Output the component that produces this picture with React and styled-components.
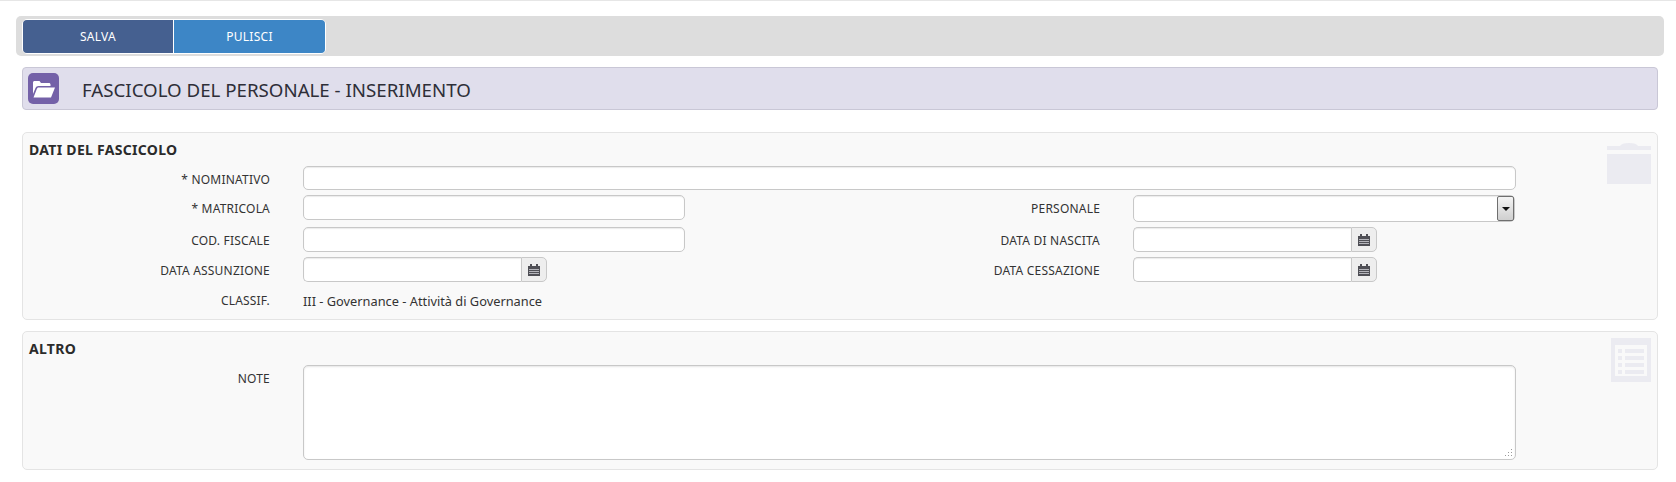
import React from 'react';
import styled, { createGlobalStyle } from 'styled-components';

const GlobalStyle = createGlobalStyle`
  html, body {
    margin: 0;
    padding: 0;
    background: #fff;
    font-family: "Noto Sans", "Open Sans", sans-serif;
    color: #333;
  }
`;

const Page = styled.div`
  border-top: 1px solid #e6e6e6;
  padding: 15px 12px 0 16px;
  height: 466px;
`;

const Toolbar = styled.div`
  display: flex;
  height: 40px;
  box-sizing: border-box;
  padding: 3px 6px;
  background: #dddddd;
  border-radius: 5px;
`;

const ButtonGroup = styled.div`
  display: flex;
  height: 33px;
  border: 1px solid #fff;
  border-radius: 5px;
  overflow: hidden;
`;

const ActionButton = styled.button`
  width: ${(p) => p.$width}px;
  border: 0;
  padding: 0;
  background: ${(p) => p.$color};
  color: #fff;
  font-family: inherit;
  font-size: 12px;
  letter-spacing: 0.3px;
  & + & {
    border-left: 1px solid #fff;
  }
`;

const TitleBar = styled.div`
  display: flex;
  align-items: center;
  height: 43px;
  box-sizing: border-box;
  margin: 11px 6px 22px 6px;
  padding-left: 5px;
  background: #e0deec;
  border: 1px solid #c9c7d6;
  border-radius: 4px;
`;

const TitleIcon = styled.div`
  display: flex;
  align-items: center;
  justify-content: center;
  width: 31px;
  height: 31px;
  background: #7461a8;
  border-radius: 5px;
`;

const Title = styled.h1`
  margin: 2px 0 0 23px;
  font-size: 18.7px;
  font-weight: 400;
  color: #2e2e38;
`;

const Panel = styled.section`
  position: relative;
  margin: 0 6px 11px 6px;
  box-sizing: border-box;
  height: ${(p) => p.$height}px;
  padding: 8px 0 0 6px;
  background: #f9f9f9;
  border: 1px solid #e4e4e4;
  border-radius: 5px;
`;

const PanelTitle = styled.h2`
  margin: 0 0 1px 0;
  height: 24px;
  line-height: 18px;
  font-size: 14px;
  font-weight: 700;
  letter-spacing: 0.3px;
  color: #2b2b2b;
`;

const Watermark = styled.svg`
  position: absolute;
  top: ${(p) => p.$top}px;
  right: 6px;
  fill: #ebebf1;
`;

const FormGrid = styled.div`
  display: grid;
  margin-left: -6px;
  grid-template-columns: 280px 382px 448px 383px;
  grid-template-rows: ${(p) => p.$rows};
  align-items: start;
`;

const FieldLabel = styled.label`
  display: block;
  box-sizing: border-box;
  padding-right: 33px;
  line-height: 28px;
  text-align: right;
  font-size: 12px;
  letter-spacing: 0.2px;
  color: #333;
`;

const TextInput = styled.input`
  display: block;
  box-sizing: border-box;
  width: 100%;
  height: ${(p) => p.$height || 25}px;
  padding: 0 6px;
  background: #fff;
  border: 1px solid #c8c8c8;
  border-radius: 5px;
  box-shadow: inset 0 1px 1px rgba(0, 0, 0, 0.08);
  outline: none;
`;

const WideField = styled.div`
  position: relative;
  grid-column: 2 / 5;
  width: 1213px;
`;

const DateGroup = styled.div`
  display: flex;
  width: ${(p) => p.$width}px;
  height: 25px;
  box-sizing: border-box;
`;

const DateInput = styled(TextInput)`
  flex: 1;
  min-width: 0;
  border-radius: 5px 0 0 5px;
  border-right: 0;
`;

const CalendarAddon = styled.div`
  display: flex;
  align-items: center;
  justify-content: center;
  box-sizing: border-box;
  width: 26px;
  background: #eeeeee;
  border: 1px solid #c8c8c8;
  border-radius: 0 5px 5px 0;
`;

const SelectBox = styled.div`
  display: flex;
  justify-content: flex-end;
  width: 382px;
  height: 27px;
  box-sizing: border-box;
  background: #fff;
  border: 1px solid #c8c8c8;
  border-radius: 5px;
  box-shadow: inset 0 1px 1px rgba(0, 0, 0, 0.08);
`;

const SelectArrow = styled.div`
  display: flex;
  align-items: center;
  justify-content: center;
  width: 17px;
  box-sizing: border-box;
  background: linear-gradient(#f4f4f4, #cfcfcf);
  border: 1px solid #6f6f6f;
  border-radius: 2px;
  &::after {
    content: '';
    border-left: 4px solid transparent;
    border-right: 4px solid transparent;
    border-top: 4px solid #111;
  }
`;

const StaticValue = styled.div`
  grid-column: 2 / 4;
  line-height: 28px;
  font-size: 12.8px;
  color: #333;
`;

const NotesArea = styled.textarea`
  display: block;
  box-sizing: border-box;
  width: 1213px;
  height: 95px;
  background: #fff;
  border: 1px solid #c8c8c8;
  border-radius: 5px;
  box-shadow: inset 0 1px 2px rgba(0, 0, 0, 0.1);
  outline: none;
  resize: none;
`;

const ResizeGrip = styled.svg`
  position: absolute;
  right: 3px;
  bottom: 2px;
  fill: #9a9a9a;
`;

const FolderOpenIcon = () => (
  <svg width="24" height="20" viewBox="0 0 24 20">
    <path fill="#fff" d="M1 3.5C1 2.7 1.7 2 2.5 2h5l1.5 2h8c.8 0 1.5.7 1.5 1.5V7H6.5C5 7 4 7.8 3.5 9L1 15z" />
    <path fill="#fff" d="M6.5 8.5H23L19 18.5H1.5L4.8 10c.3-.9 1-1.5 1.7-1.5z" />
  </svg>
);

const CalendarIcon = () => (
  <svg width="12" height="12" viewBox="0 0 12 12" shapeRendering="crispEdges">
    <path fill="#4f4f55" d="M2 0h2v2h4V0h2v2h2v10H0V2h2z" />
    <path fill="#b4b4ba" d="M1 5h10v1H1zM1 7h10v1H1zM1 9h10v1H1z" />
  </svg>
);

const DateField = ({ width }) => (
  <DateGroup $width={width}>
    <DateInput />
    <CalendarAddon>
      <CalendarIcon />
    </CalendarAddon>
  </DateGroup>
);

const App = () => (
  <Page>
    <GlobalStyle />
    <Toolbar>
      <ButtonGroup>
        <ActionButton $width={150} $color="#456090">SALVA</ActionButton>
        <ActionButton $width={152} $color="#3d86c6">PULISCI</ActionButton>
      </ButtonGroup>
    </Toolbar>

    <TitleBar>
      <TitleIcon>
        <FolderOpenIcon />
      </TitleIcon>
      <Title>FASCICOLO DEL PERSONALE - INSERIMENTO</Title>
    </TitleBar>

    <Panel $height={188}>
      <PanelTitle>DATI DEL FASCICOLO</PanelTitle>
      <Watermark $top={10} width="44" height="41" viewBox="0 0 44 41">
        <path d="M0 3h13c1-2 4-3 9-3s8 1 9 3h13v4H0zM0 11h44v30H0z" />
      </Watermark>
      <FormGrid $rows="29px 32px 30px 30px 24px">
        <FieldLabel>* NOMINATIVO</FieldLabel>
        <WideField>
          <TextInput $height={24} />
        </WideField>

        <FieldLabel>* MATRICOLA</FieldLabel>
        <TextInput />
        <FieldLabel>PERSONALE</FieldLabel>
        <SelectBox>
          <SelectArrow />
        </SelectBox>

        <FieldLabel>COD. FISCALE</FieldLabel>
        <TextInput />
        <FieldLabel>DATA DI NASCITA</FieldLabel>
        <DateField width={244} />

        <FieldLabel>DATA ASSUNZIONE</FieldLabel>
        <DateField width={244} />
        <FieldLabel>DATA CESSAZIONE</FieldLabel>
        <DateField width={244} />

        <FieldLabel>CLASSIF.</FieldLabel>
        <StaticValue>III - Governance - Attività di Governance</StaticValue>
      </FormGrid>
    </Panel>

    <Panel $height={139}>
      <PanelTitle>ALTRO</PanelTitle>
      <Watermark $top={6} width="40" height="44" viewBox="0 0 40 44">
        <path fillRule="evenodd" d="M0 0h40v44H0zM4 7v31h32V7z" />
        <path d="M7 11h4v4H7zM14 11h19v4H14zM7 18h4v4H7zM14 18h19v4H14zM7 25h4v4H7zM14 25h19v4H14zM7 32h4v4H7zM14 32h19v4H14z" />
      </Watermark>
      <FormGrid $rows="96px">
        <FieldLabel>NOTE</FieldLabel>
        <WideField>
          <NotesArea />
          <ResizeGrip width="9" height="9" viewBox="0 0 9 9">
            <path d="M7 0h1v1H7zM4 3h1v1H4zM7 3h1v1H7zM1 6h1v1H1zM4 6h1v1H4zM7 6h1v1H7z" />
          </ResizeGrip>
        </WideField>
      </FormGrid>
    </Panel>
  </Page>
);

export default App;
